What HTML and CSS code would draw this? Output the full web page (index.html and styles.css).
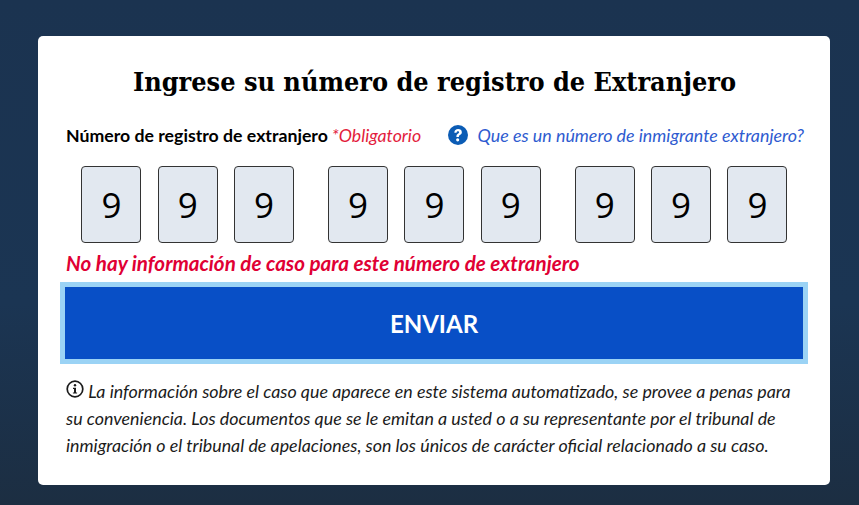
FILE: index.html
```html
<!DOCTYPE html>
<html lang="es">
<head>
  <meta charset="UTF-8">
  <meta name="viewport" content="width=device-width, initial-scale=1.0">
  <title>Número de registro de Extranjero</title>
  <link rel="stylesheet" href="styles.css">
</head>
<body>
  <main class="card">
    <h1 class="title">Ingrese su número de registro de Extranjero</h1>

    <div class="label-row">
      <label class="label" for="d1">Número de registro de extranjero</label>
      <span class="required">*Obligatorio</span>
      <a href="#" class="help">
        <svg class="help-icon" viewBox="0 0 24 24" aria-hidden="true">
          <circle cx="12" cy="12" r="12" fill="#0b5cb5"/>
          <path d="M7.6 9.2c0-2.6 2-4.3 4.6-4.3 2.5 0 4.4 1.5 4.4 3.7 0 1.7-1 2.6-2.2 3.3-1 .6-1.3 1-1.3 1.8v.6h-3v-.8c0-1.5.6-2.3 1.8-3 1-.6 1.5-1 1.5-1.7 0-.8-.7-1.3-1.5-1.3-1 0-1.6.7-1.6 1.7z" fill="#fff"/>
          <circle cx="11.6" cy="17.8" r="1.9" fill="#fff"/>
        </svg>
        <span>Que es un número de inmigrante extranjero?</span>
      </a>
    </div>

    <div class="digits">
      <div class="digit-group">
        <input class="digit" id="d1" value="9" maxlength="1">
        <input class="digit" value="9" maxlength="1">
        <input class="digit" value="9" maxlength="1">
      </div>
      <div class="digit-group">
        <input class="digit" value="9" maxlength="1">
        <input class="digit" value="9" maxlength="1">
        <input class="digit" value="9" maxlength="1">
      </div>
      <div class="digit-group">
        <input class="digit" value="9" maxlength="1">
        <input class="digit" value="9" maxlength="1">
        <input class="digit" value="9" maxlength="1">
      </div>
    </div>

    <p class="error">No hay información de caso para este número de extranjero</p>

    <button class="submit" type="button">ENVIAR</button>

    <p class="note">
      <svg class="note-icon" viewBox="0 0 18 18" aria-hidden="true">
        <circle cx="9" cy="9" r="7.8" fill="none" stroke="#1b1b1b" stroke-width="1.7"/>
        <circle cx="9" cy="5.3" r="1.2" fill="#1b1b1b"/>
        <path d="M7 7.8h3v4.6h1.1v1.2H6.9v-1.2H8V9H7z" fill="#1b1b1b"/>
      </svg>
      La información sobre el caso que aparece en este sistema automatizado, se provee a penas para su conveniencia. Los documentos que se le emitan a usted o a su representante por el tribunal de inmigración o el tribunal de apelaciones, son los únicos de carácter oficial relacionado a su caso.
    </p>
  </main>
</body>
</html>
```

FILE: styles.css
```css
* {
  box-sizing: border-box;
}
body {
  margin: 0;
  height: 505px;
  overflow: hidden;
  padding: 36px 29px 0 38px;
  background: linear-gradient(#1b3350, #1b3553 60%, #1c2e42);
  font-family: 'Lato', 'Noto Sans', sans-serif;
  color: #1b1b1b;
}
.card {
  height: 449px;
  padding: 27px 27px 0 28px;
  background-color: #fff;
  border-radius: 5px;
}
.title {
  margin: 0;
  font-family: 'DejaVu Serif', serif;
  font-stretch: condensed;
  font-size: 26.8px;
  line-height: 38px;
  font-weight: bold;
  text-align: center;
  color: #000;
}
.label-row {
  display: flex;
  align-items: center;
  height: 24px;
  margin-top: 22px;
  font-size: 17.7px;
}
.label {
  font-weight: bold;
  color: #000;
}
.required {
  margin-left: 4px;
  font-style: italic;
  color: #e31c3d;
}
.help {
  display: flex;
  align-items: center;
  margin-left: auto;
  margin-right: -1px;
  font-size: 17.85px;
  font-style: italic;
  color: #2e5bd0;
  text-decoration: none;
}
.help-icon {
  width: 20px;
  height: 20px;
  margin-right: 10px;
}
.digits {
  display: flex;
  justify-content: space-between;
  margin: 19px 15.6px 0 15.4px;
}
.digit-group {
  display: flex;
  gap: 16.3px;
}
.digit {
  width: 60px;
  height: 77px;
  padding: 0;
  border: 1px solid #333;
  border-radius: 4px;
  background-color: #e2e8f0;
  font-family: 'Open Sans', sans-serif;
  font-size: 35px;
  text-align: center;
  color: #000;
}
.error {
  margin: 8px 0 0;
  font-size: 20.6px;
  line-height: 24px;
  font-weight: bold;
  font-style: italic;
  color: #e00034;
}
.submit {
  display: block;
  width: 738px;
  height: 72px;
  margin: 12px 0 0 -1px;
  border: none;
  outline: 5px solid #9bd3f5;
  background-color: #084fc6;
  font-family: inherit;
  font-size: 24px;
  font-weight: bold;
  color: #fff;
}
.note {
  margin: 19px 0 0;
  font-size: 17.85px;
  line-height: 27px;
  font-style: italic;
}
.note-icon {
  width: 18px;
  height: 18px;
  vertical-align: 0;
}
```
